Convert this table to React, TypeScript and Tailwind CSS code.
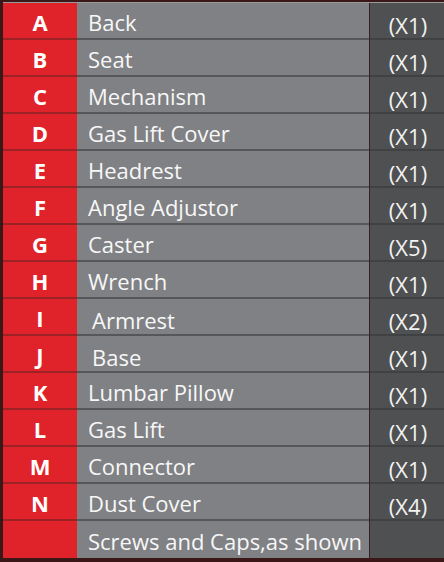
import React from 'react';

type Part = { letter: string; name: string; qty: string; shift?: boolean };

const parts: Part[] = [
  { letter: 'A', name: 'Back', qty: '(X1)' },
  { letter: 'B', name: 'Seat', qty: '(X1)' },
  { letter: 'C', name: 'Mechanism', qty: '(X1)' },
  { letter: 'D', name: 'Gas Lift Cover', qty: '(X1)' },
  { letter: 'E', name: 'Headrest', qty: '(X1)' },
  { letter: 'F', name: 'Angle Adjustor', qty: '(X1)' },
  { letter: 'G', name: 'Caster', qty: '(X5)' },
  { letter: 'H', name: 'Wrench', qty: '(X1)' },
  { letter: 'I', name: 'Armrest', qty: '(X2)', shift: true },
  { letter: 'J', name: 'Base', qty: '(X1)', shift: true },
  { letter: 'K', name: 'Lumbar Pillow', qty: '(X1)' },
  { letter: 'L', name: 'Gas Lift', qty: '(X1)' },
  { letter: 'M', name: 'Connector', qty: '(X1)' },
  { letter: 'N', name: 'Dust Cover', qty: '(X4)' },
  { letter: '', name: 'Screws and Caps,as shown', qty: '' },
];

function PartRow({ part, last }: { part: Part; last: boolean }) {
  return (
    <div className="flex h-[37px] leading-none">
      <div
        className={`w-[74px] flex items-center justify-center bg-[#e0232a] text-white font-bold text-[22px] pt-[3px] ${
          last ? '' : 'border-b-2 border-[#9c2226]'
        }`}
      >
        {part.letter}
      </div>
      <div
        className={`w-[292px] flex items-center bg-[#808184] text-[#f7f7f7] text-[22px] ${
          part.shift ? 'pl-[15px] pt-[6px]' : 'pl-[11px] pt-[2px]'
        } ${last ? '' : 'border-b-2 border-[#56575a]'}`}
      >
        {part.name}
      </div>
      <div className="w-px bg-[#3a1f22]" />
      <div
        className={`flex-1 flex items-center justify-center bg-[#4e5051] text-[#f2f2f2] text-[22px] pt-[9px] pl-[2px] ${
          last ? '' : 'border-b-2 border-[#3f4142]'
        }`}
      >
        {part.qty}
      </div>
    </div>
  );
}

export default function App() {
  return (
    <div
      className="w-[444px] h-[562px] bg-[#3b1718] pl-[3px] pt-[2px] overflow-hidden"
      style={{ fontFamily: '"Open Sans", "Noto Sans", sans-serif' }}
    >
      <div className="border-t border-[#9a9a9c]">
        {parts.map((p, i) => (
          <PartRow key={i} part={p} last={i === parts.length - 1} />
        ))}
      </div>
    </div>
  );
}
